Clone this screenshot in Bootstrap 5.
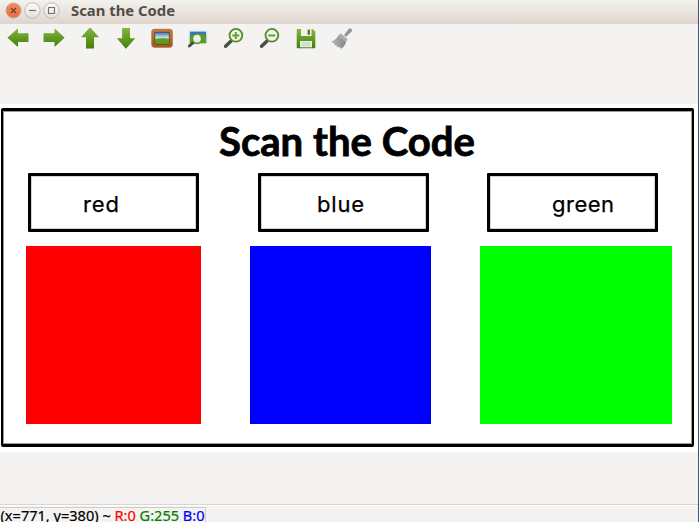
<!DOCTYPE html>
<html lang="en">
<head>
<meta charset="utf-8">
<title>Scan the Code</title>
<link href="https://cdn.jsdelivr.net/npm/bootstrap@5.3.0/dist/css/bootstrap.min.css" rel="stylesheet">
<style>
body{width:699px;height:522px;background:#f4f3f2;font-family:"Noto Sans","Open Sans",sans-serif}
.app-window{width:699px;height:522px;border-right:1px solid #3d527c}
.title-strip{height:24px;background:linear-gradient(#f3f2ee,#e7dfd9 65%,#ddd5cc);padding-left:5px}
.win-btn{width:19px;height:19px;display:block}
.caption-text{display:block;margin-left:9px}
.tool-strip{height:80px;padding:4px 0 0 7px;gap:14px}
.tool-strip svg{width:22px;height:22px;display:block}
.viewer{height:348px;padding:4px 4px 5px 1px}
.board{border:2px solid #000;border-top-width:3px;border-bottom-width:3px;border-radius:2px;box-shadow:inset 0 0 0 1px #999}
.heading-text{display:block;height:62px}
.tag-row{margin-left:25px;gap:59px}
.tag-box{width:171px;height:59px;border:3px solid #000;border-radius:1px;box-shadow:inset 0 0 0 .5px #aaa}
.tag-row .tag-box:nth-child(3){margin-left:-1px}
.tag-box svg{display:block;width:165px;height:53px}
.tag-box text{font-family:Inter,sans-serif;font-weight:400;stroke:#000;stroke-width:.25px}
.swatches{margin:14px 0 0 23px;height:178px}
.sw-red{width:175px;background:#f00}
.sw-blue{width:181px;background:#00f;margin-left:49px}
.sw-green{width:192px;background:#0f0;margin-left:49px}
.gap-area{height:52px}
.status-strip{height:18px;border-top:1px solid #d8d4cf;padding-top:2px;box-shadow:inset 0 1px #fff}
.status-box{width:206px;height:15px;border-top:1px solid #cfccc9;border-right:1px solid #cfccc9}
.status-box svg{display:block;overflow:visible}
</style>
</head>
<body class="m-0 overflow-hidden">
<svg width="0" height="0" class="position-absolute">
<defs>
<linearGradient id="gr" x1="0" y1="0" x2="0" y2="1"><stop offset="0" stop-color="#83b93e"/><stop offset="1" stop-color="#457d0c"/></linearGradient>
<linearGradient id="sky" x1="0" y1="0" x2="0" y2="1"><stop offset="0" stop-color="#3675bb"/><stop offset=".5" stop-color="#d8ecf4"/><stop offset=".55" stop-color="#80b83d"/><stop offset="1" stop-color="#4a8c14"/></linearGradient>
<linearGradient id="wood" x1="0" y1="0" x2="0" y2="1"><stop offset="0" stop-color="#c87c42"/><stop offset="1" stop-color="#a8571f"/></linearGradient>
<linearGradient id="btn" x1="0" y1="0" x2="0" y2="1"><stop offset="0" stop-color="#fcfbf9"/><stop offset="1" stop-color="#e4dfd9"/></linearGradient>
<linearGradient id="orange" x1="0" y1="0" x2="0" y2="1"><stop offset="0" stop-color="#f58a66"/><stop offset="1" stop-color="#ee6b3e"/></linearGradient>
<linearGradient id="grey" x1="0" y1="0" x2="1" y2="0"><stop offset="0" stop-color="#bbb"/><stop offset="1" stop-color="#858585"/></linearGradient>
</defs>
</svg>
<main class="app-window d-flex flex-column">
<header class="title-strip d-flex flex-shrink-0 align-items-start">
<svg class="win-btn" viewBox="0 0 19 19"><circle cx="8.5" cy="10.5" r="7.5" fill="url(#orange)" stroke="#c3a595"/><path d="M6 8l5 5M11 8l-5 5" stroke="#6b3f30" stroke-width="1.2"/></svg>
<svg class="win-btn" viewBox="0 0 19 19"><circle cx="8.5" cy="10.5" r="7.7" fill="url(#btn)" stroke="#bdb8b1"/><path d="M5 10.5h7" stroke="#77736c" stroke-width="1.2"/></svg>
<svg class="win-btn" viewBox="0 0 19 19"><circle cx="8.5" cy="10.5" r="7.7" fill="url(#btn)" stroke="#bdb8b1"/><path d="M5.5 7.5h6v6h-6z" fill="none" stroke="#77736c" stroke-width="1.1"/></svg>
<svg class="caption-text" width="120" height="24"><text x="0" y="16" font-family="Noto Sans,sans-serif" font-size="14" font-weight="700" fill="#544d48" textLength="104" lengthAdjust="spacingAndGlyphs">Scan the Code</text></svg>
</header>
<nav class="tool-strip d-flex flex-shrink-0 align-items-start">
<svg viewBox="0 0 22 22"><path d="M.4 9.7L11 .2v5.1h10.5v8.6H11V19z" fill="url(#gr)"/></svg>
<svg viewBox="0 0 22 22"><path d="M21.6 9.7L11.5.2v5.1H.5v8.6h11V19z" fill="url(#gr)"/></svg>
<svg viewBox="0 0 22 22"><path d="M11-.7L20 9.3h-5v11.2H7V9.3H2z" fill="url(#gr)"/></svg>
<svg viewBox="0 0 22 22"><path d="M11 20.8L1.8 10.3h5.3V-.6H15v10.9h5.3z" fill="url(#gr)"/></svg>
<svg viewBox="0 0 22 22"><rect x=".8" y="1.3" width="20.5" height="18" rx="2.4" fill="url(#wood)" stroke="#a46332" stroke-width=".8"/><rect x="3.8" y="4.2" width="14.4" height="12" fill="url(#sky)" stroke="#5b4320" stroke-width=".8"/><path d="M4.3 11.6q6-2.3 13.4-.6v4.7H4.3z" fill="#5d9c20"/></svg>
<svg viewBox="0 0 22 22"><rect x="1.5" y="2.3" width="19" height="14.2" rx="1" fill="#fff" stroke="#e3e3e1" stroke-width=".7"/><rect x="2.8" y="3.5" width="16.4" height="11.7" fill="#3478b8"/><path d="M2.8 8q8-3 16.4-1v8.2H2.8z" fill="#5c9c25"/><path d="M2.3 18l4.6-4.1" stroke="#454843" stroke-width="2.8" stroke-linecap="round"/><circle cx="10" cy="10.7" r="4.6" fill="#d9ebc8" stroke="#58932a" stroke-width="1.4"/><path d="M7.5 9l3 4M10 7.7l3 4" stroke="#fff" stroke-width="1.2"/></svg>
<svg viewBox="0 0 22 22"><path d="M2.6 18.2l5.2-4.9" stroke="#4a4d48" stroke-width="3.5" stroke-linecap="round"/><circle cx="12.9" cy="7.3" r="6.4" fill="#eff6e8" stroke="#548b27" stroke-width="1.8"/><path d="M9.3 7.5h7M12.8 4V11" stroke="#649f33" stroke-width="2"/></svg>
<svg viewBox="0 0 22 22"><path d="M2.6 18.2l5.2-4.9" stroke="#4a4d48" stroke-width="3.5" stroke-linecap="round"/><circle cx="12.9" cy="7.3" r="6.4" fill="#eff6e8" stroke="#548b27" stroke-width="1.8"/><path d="M9.3 7.5h7" stroke="#649f33" stroke-width="2"/></svg>
<svg viewBox="0 0 22 22"><path d="M2.3.9H17.5L20.3 3.4v16q0 .8-.8.8h-17q-.8 0-.8-.8V1.7q0-.8.6-.8z" fill="url(#gr)"/><path d="M6 .9h10.5V8H6z" fill="#f1f2ef"/><path d="M12.6 1.7H15v5h-2.4z" fill="#467b14"/><path d="M5 13h12v6.3H5z" fill="#e9eee4"/><path d="M6.5 15h9M6.5 17.2h9" stroke="#bdc9b3" stroke-width="1"/></svg>
<svg viewBox="0 0 22 22"><path d="M13.2 7.1L17.8.7q1.3-1 2.6.2t.2 2.6l-5.8 5.4z" fill="#929292"/><path d="M9.7 5.2l7 6.3-1.8 2.4-7.6-6.5z" fill="#aaa"/><path d="M7.3 7.4l7.6 6.5q-.9 4.3-4.7 6.8L8.3 19l-2 .3-1-2-2-.1-.2-1.8L0 13.7Q5 11.8 7.3 7.4z" fill="url(#grey)"/></svg>
</nav>
<section class="viewer bg-white flex-shrink-0">
<div class="board h-100">
<svg class="heading-text" width="680" height="62"><text x="216" y="45" font-family="Lato,sans-serif" font-size="39.5" font-weight="700" stroke="#000" stroke-width=".8" textLength="256" lengthAdjust="spacingAndGlyphs">Scan the Code</text></svg>
<div class="tag-row d-flex">
<div class="tag-box"><svg><text x="52" y="35.5" font-size="22" textLength="36">red</text></svg></div>
<div class="tag-box"><svg><text x="56" y="35.5" font-size="22" textLength="47">blue</text></svg></div>
<div class="tag-box"><svg><text x="62" y="35.5" font-size="22" textLength="62">green</text></svg></div>
</div>
<div class="swatches d-flex">
<div class="sw-red"></div><div class="sw-blue"></div><div class="sw-green"></div>
</div>
</div>
</section>
<div class="gap-area flex-shrink-0"></div>
<footer class="status-strip flex-shrink-0">
<div class="status-box"><svg width="206" height="15"><text x="0.5" y="13" font-family="Noto Sans,sans-serif" font-size="14" stroke-width=".2" stroke="#000" textLength="204" lengthAdjust="spacingAndGlyphs">(x=771, y=380) ~ <tspan fill="#f00" stroke="#f00">R:0</tspan> <tspan fill="#008000" stroke="#008000">G:255</tspan> <tspan fill="#00f" stroke="#00f">B:0</tspan></text></svg></div>
</footer>
</main>
<script src="https://cdn.jsdelivr.net/npm/bootstrap@5.3.0/dist/js/bootstrap.bundle.min.js"></script>
</body>
</html>
